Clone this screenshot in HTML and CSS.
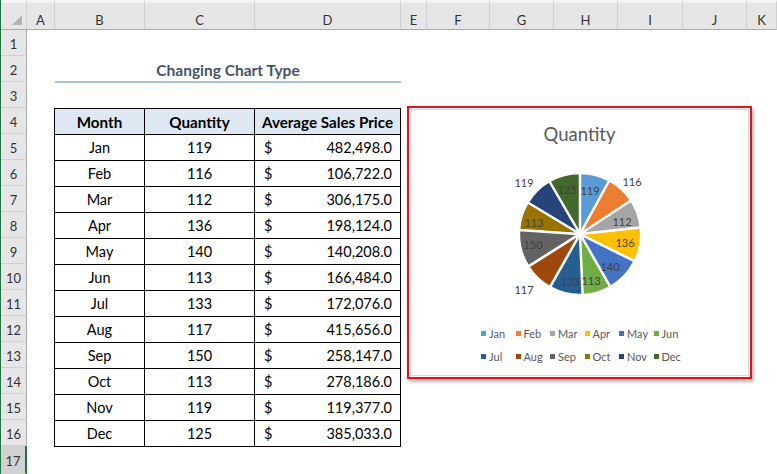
FILE: index.html
```html
<!DOCTYPE html>
<html lang="en">
<head>
<meta charset="utf-8">
<title>Changing Chart Type</title>
<link rel="stylesheet" href="styles.css">
</head>
<body>
<div class="sheet">
  <div class="corner"><svg class="corner-tri" width="10" height="10" viewBox="0 0 10 10"><polygon points="10,0 10,10 0,10" fill="#b4b4b4"/></svg></div>
  <div class="colhead">A</div>
  <div class="colhead">B</div>
  <div class="colhead">C</div>
  <div class="colhead">D</div>
  <div class="colhead">E</div>
  <div class="colhead">F</div>
  <div class="colhead">G</div>
  <div class="colhead">H</div>
  <div class="colhead">I</div>
  <div class="colhead">J</div>
  <div class="colhead">K</div>

  <div class="rowhead r1">1</div>
  <div class="rowhead r2">2</div>
  <div class="rowhead r3">3</div>
  <div class="rowhead r4">4</div>
  <div class="rowhead r5">5</div>
  <div class="rowhead r6">6</div>
  <div class="rowhead r7">7</div>
  <div class="rowhead r8">8</div>
  <div class="rowhead r9">9</div>
  <div class="rowhead r10">10</div>
  <div class="rowhead r11">11</div>
  <div class="rowhead r12">12</div>
  <div class="rowhead r13">13</div>
  <div class="rowhead r14">14</div>
  <div class="rowhead r15">15</div>
  <div class="rowhead r16">16</div>
  <div class="rowhead r17 selected">17</div>

  <div class="title">Changing Chart Type</div>

  <table class="data">
    <thead>
      <tr><th>Month</th><th>Quantity</th><th>Average Sales Price</th></tr>
    </thead>
    <tbody>
      <tr><td>Jan</td><td>119</td><td><span class="cur">$</span><span class="amt">482,498.0</span></td></tr>
      <tr><td>Feb</td><td>116</td><td><span class="cur">$</span><span class="amt">106,722.0</span></td></tr>
      <tr><td>Mar</td><td>112</td><td><span class="cur">$</span><span class="amt">306,175.0</span></td></tr>
      <tr><td>Apr</td><td>136</td><td><span class="cur">$</span><span class="amt">198,124.0</span></td></tr>
      <tr><td>May</td><td>140</td><td><span class="cur">$</span><span class="amt">140,208.0</span></td></tr>
      <tr><td>Jun</td><td>113</td><td><span class="cur">$</span><span class="amt">166,484.0</span></td></tr>
      <tr><td>Jul</td><td>133</td><td><span class="cur">$</span><span class="amt">172,076.0</span></td></tr>
      <tr><td>Aug</td><td>117</td><td><span class="cur">$</span><span class="amt">415,656.0</span></td></tr>
      <tr><td>Sep</td><td>150</td><td><span class="cur">$</span><span class="amt">258,147.0</span></td></tr>
      <tr><td>Oct</td><td>113</td><td><span class="cur">$</span><span class="amt">278,186.0</span></td></tr>
      <tr><td>Nov</td><td>119</td><td><span class="cur">$</span><span class="amt">119,377.0</span></td></tr>
      <tr><td>Dec</td><td>125</td><td><span class="cur">$</span><span class="amt">385,033.0</span></td></tr>
    </tbody>
  </table>

  <div class="chart-frame">
    <div class="chart">
      <div class="chart-title">Quantity</div>
      <svg class="pie" width="200" height="160" viewBox="-100 -80 200 160">
        <g stroke="#ffffff" stroke-width="1.2">
          <path transform="translate(0.62 -2.42)" d="M0 0L0 -58A58 58 0 0 1 27.85 -50.88Z" fill="#5B9BD5"/>
          <path transform="translate(1.70 -1.84)" d="M0 0L27.85 -50.88A58 58 0 0 1 48.46 -31.87Z" fill="#ED7D31"/>
          <path transform="translate(2.35 -0.85)" d="M0 0L48.46 -31.87A58 58 0 0 1 57.64 -6.27Z" fill="#A5A5A5"/>
          <path transform="translate(2.46 0.44)" d="M0 0L57.64 -6.27A58 58 0 0 1 51.92 25.85Z" fill="#FFC000"/>
          <path transform="translate(1.82 1.72)" d="M0 0L51.92 25.85A58 58 0 0 1 28.81 50.34Z" fill="#4472C4"/>
          <path transform="translate(0.70 2.40)" d="M0 0L28.81 50.34A58 58 0 0 1 2.56 57.94Z" fill="#70AD47"/>
          <path transform="translate(-0.58 2.43)" d="M0 0L2.56 57.94A58 58 0 0 1 -28.59 50.46Z" fill="#255E91"/>
          <path transform="translate(-1.73 1.81)" d="M0 0L-28.59 50.46A58 58 0 0 1 -49.05 30.95Z" fill="#9E480E"/>
          <path transform="translate(-2.42 0.61)" d="M0 0L-49.05 30.95A58 58 0 0 1 -57.86 -3.96Z" fill="#636363"/>
          <path transform="translate(-2.38 -0.75)" d="M0 0L-57.86 -3.96A58 58 0 0 1 -49.63 -30.02Z" fill="#997300"/>
          <path transform="translate(-1.75 -1.78)" d="M0 0L-49.63 -30.02A58 58 0 0 1 -29.12 -50.16Z" fill="#264478"/>
          <path transform="translate(-0.65 -2.41)" d="M0 0L-29.12 -50.16A58 58 0 0 1 0 -58Z" fill="#43682B"/>
        </g>
        <g class="pie-labels">
          <text x="10" y="-44">119</text>
          <text x="52" y="-53">116</text>
          <text x="42" y="-13">112</text>
          <text x="45" y="8">136</text>
          <text x="30" y="32">140</text>
          <text x="11" y="46">113</text>
          <text x="-10" y="47">133</text>
          <text x="-56" y="55">117</text>
          <text x="-47" y="10">150</text>
          <text x="-46" y="-12">113</text>
          <text x="-56" y="-52">119</text>
          <text x="-13" y="-45">125</text>
        </g>
      </svg>
      <div class="legend">
        <span class="item"><i class="sw c-jan"></i>Jan</span>
        <span class="item"><i class="sw c-feb"></i>Feb</span>
        <span class="item"><i class="sw c-mar"></i>Mar</span>
        <span class="item"><i class="sw c-apr"></i>Apr</span>
        <span class="item"><i class="sw c-may"></i>May</span>
        <span class="item"><i class="sw c-jun"></i>Jun</span>
        <span class="item"><i class="sw c-jul"></i>Jul</span>
        <span class="item"><i class="sw c-aug"></i>Aug</span>
        <span class="item"><i class="sw c-sep"></i>Sep</span>
        <span class="item"><i class="sw c-oct"></i>Oct</span>
        <span class="item"><i class="sw c-nov"></i>Nov</span>
        <span class="item"><i class="sw c-dec"></i>Dec</span>
      </div>
    </div>
  </div>
</div>
</body>
</html>
```

FILE: styles.css
```css
* { box-sizing: border-box; }
html, body { margin: 0; padding: 0; background: #ffffff; }
body { font-family: Lato, "Open Sans", sans-serif; color: #000; }

.sheet {
  position: relative;
  width: 777px;
  height: 474px;
  overflow: hidden;
  border-left: 1px solid #217346;
  display: grid;
  grid-template-columns: 26px 28px 90px 110px 146px 26px 63px 64px 64px 65px 64px 1fr;
  grid-template-rows: 30px repeat(16, 26px) 1fr;
  background: #ffffff;
}

.corner {
  grid-column: 1;
  grid-row: 1;
  background: #e6e6e6;
  border-bottom: 1px solid #ababab;
  border-right: 1px solid #d0d0d0;
  border-top: 3px solid #f3f3f3;
  display: flex;
  align-items: flex-end;
  justify-content: flex-end;
  padding: 0 4px 4px 0;
}
.corner-tri { display: block; }

.colhead {
  grid-row: 1;
  background: #e6e6e6;
  border-top: 3px solid #f3f3f3;
  border-bottom: 1px solid #ababab;
  border-right: 1px solid #d0d0d0;
  font-size: 13px;
  color: #333333;
  display: flex;
  align-items: center;
  justify-content: center;
  padding-top: 8px;
}
.colhead:last-child { border-right: 0; }

.rowhead {
  grid-column: 1;
  background: #e6e6e6;
  border-bottom: 1px solid #d0d0d0;
  border-right: 1px solid #ababab;
  font-size: 13px;
  color: #333333;
  display: flex;
  align-items: center;
  justify-content: center;
  padding-top: 2px;
}
.rowhead.selected {
  background: #d2d2d2;
  border-right: 2px solid #217346;
  color: #3a3a3a;
}
.r1 { grid-row: 2; } .r2 { grid-row: 3; } .r3 { grid-row: 4; } .r4 { grid-row: 5; }
.r5 { grid-row: 6; } .r6 { grid-row: 7; } .r7 { grid-row: 8; } .r8 { grid-row: 9; }
.r9 { grid-row: 10; } .r10 { grid-row: 11; } .r11 { grid-row: 12; } .r12 { grid-row: 13; }
.r13 { grid-row: 14; } .r14 { grid-row: 15; } .r15 { grid-row: 16; } .r16 { grid-row: 17; }
.r17 { grid-row: 18; }

.title {
  grid-column: 3 / 6;
  grid-row: 3;
  align-self: start;
  height: 27px;
  border-bottom: 2px solid #a7c2e0;
  font-weight: 700;
  font-size: 15.5px;
  color: #44546a;
  display: flex;
  align-items: center;
  justify-content: center;
  padding-top: 2px;
}

.data {
  grid-column: 3 / 6;
  grid-row: 5 / 18;
  align-self: start;
  width: 347px;
  margin-left: -1px;
  border-collapse: collapse;
  table-layout: fixed;
  font-size: 14.5px;
}
.data th, .data td {
  border: 1px solid #000000;
  height: 26px;
  padding: 0;
  text-align: center;
  vertical-align: middle;
}
.data th:nth-child(1), .data td:nth-child(1) { width: 90px; }
.data th:nth-child(2), .data td:nth-child(2) { width: 110px; }
.data th {
  background: #dde8f3;
  font-weight: 700;
  font-size: 15.2px;
}
.data td:nth-child(3) {
  text-align: left;
}
.cur { display: inline-block; padding-left: 9px; }
.amt { float: right; padding-right: 8px; }

.chart-frame {
  position: absolute;
  left: 406px;
  top: 106px;
  width: 345px;
  height: 273px;
  border: 2px solid #e3121b;
  padding: 1px;
  background: #ffffff;
  box-shadow: 2px 3px 3px rgba(0, 0, 0, 0.28);
}
.chart {
  height: 100%;
  border: 1px solid #d9d9d9;
  display: flex;
  flex-direction: column;
  align-items: center;
}
.chart-title {
  margin-top: 13px;
  line-height: 22px;
  font-size: 18.5px;
  color: #595959;
}
.pie {
  display: block;
  margin-top: 9px;
}
.pie-labels text {
  font-family: Lato, "Open Sans", sans-serif;
  font-size: 11px;
  fill: #404040;
  text-anchor: middle;
  dominant-baseline: central;
}
.legend {
  align-self: flex-start;
  margin-left: 70px;
  margin-top: 8px;
  display: grid;
  grid-template-columns: repeat(6, 34.5px);
  grid-auto-rows: 23px;
  font-size: 11px;
  color: #595959;
}
.item {
  display: flex;
  align-items: center;
  white-space: nowrap;
}
.sw {
  display: inline-block;
  width: 5px;
  height: 5px;
  margin-right: 3px;
}
.c-jan { background: #5B9BD5; }
.c-feb { background: #ED7D31; }
.c-mar { background: #A5A5A5; }
.c-apr { background: #FFC000; }
.c-may { background: #4472C4; }
.c-jun { background: #70AD47; }
.c-jul { background: #255E91; }
.c-aug { background: #9E480E; }
.c-sep { background: #636363; }
.c-oct { background: #997300; }
.c-nov { background: #264478; }
.c-dec { background: #43682B; }
```
